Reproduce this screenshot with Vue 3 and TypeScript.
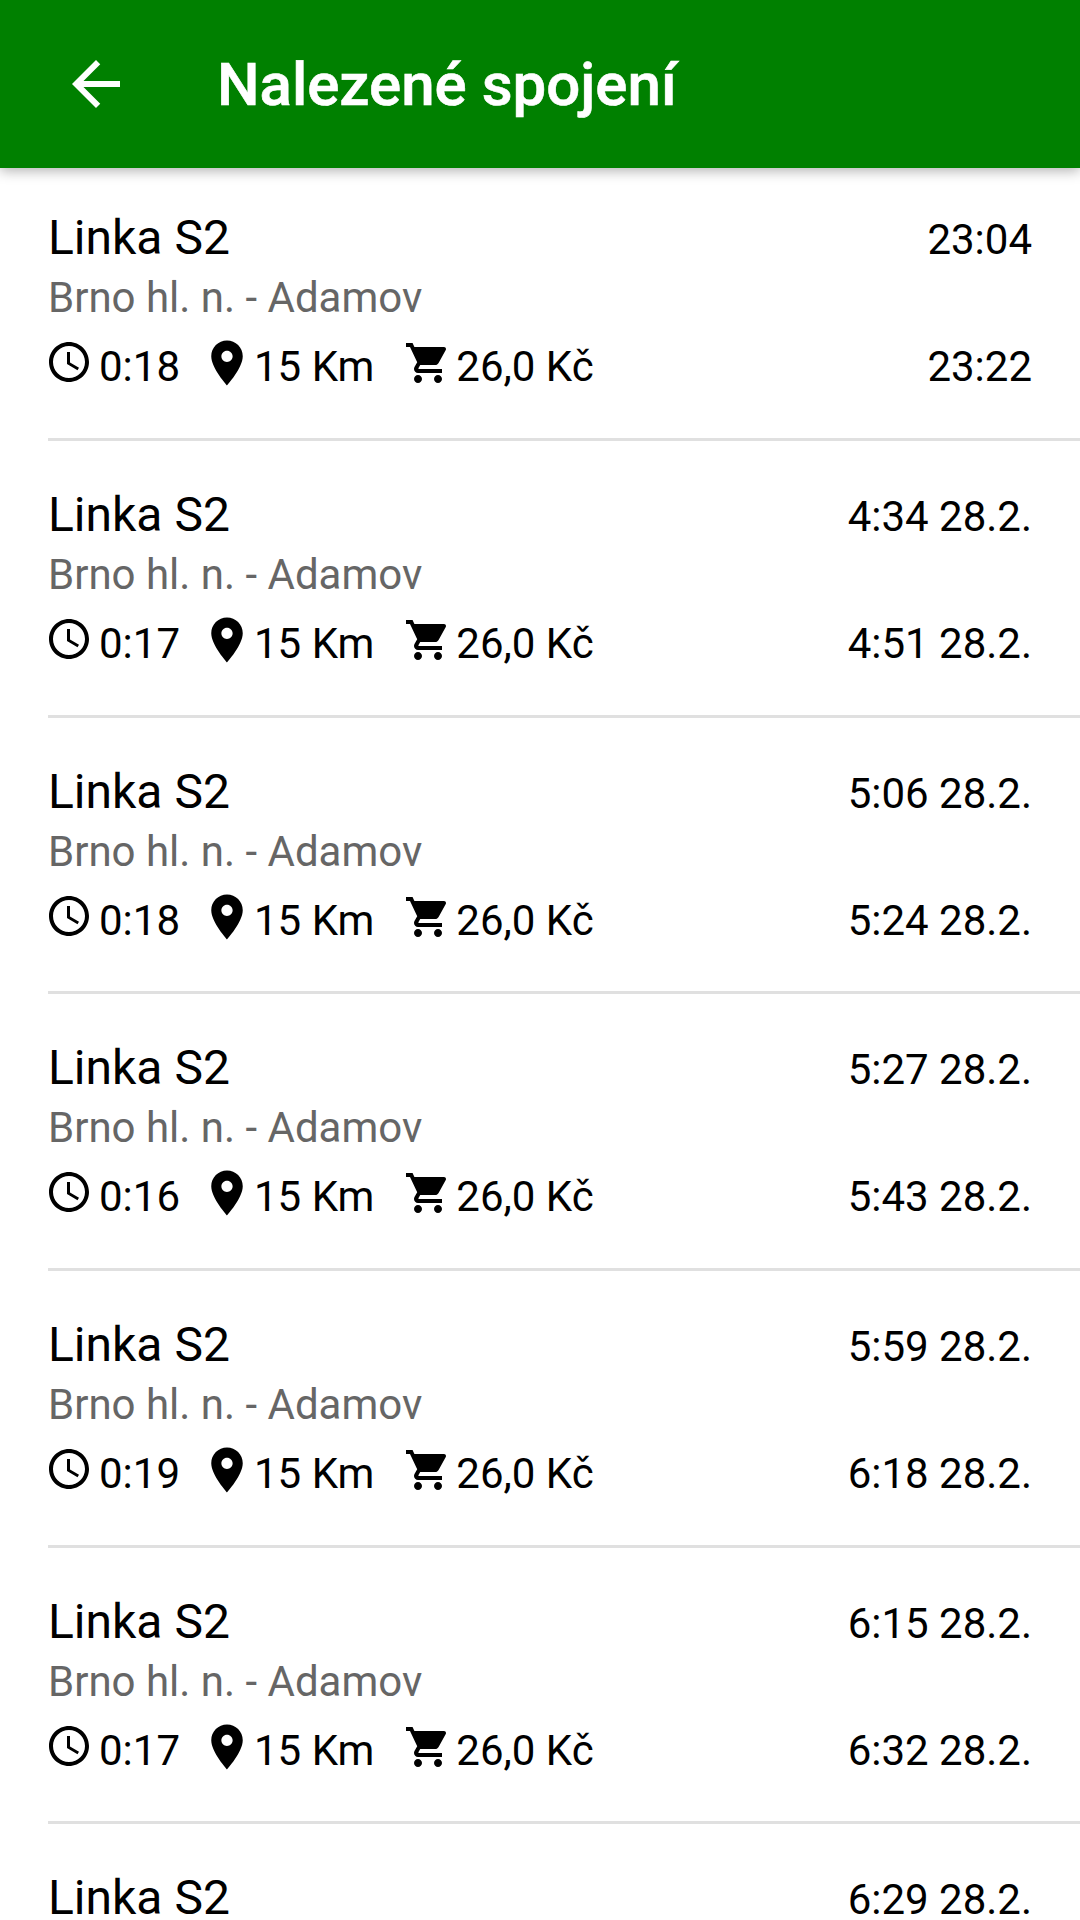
<script setup lang="ts">
interface Connection {
  duration: string
  departure: string
  arrival: string
}

const connections: Connection[] = [
  { duration: '0:18', departure: '23:04', arrival: '23:22' },
  { duration: '0:17', departure: '4:34 28.2.', arrival: '4:51 28.2.' },
  { duration: '0:18', departure: '5:06 28.2.', arrival: '5:24 28.2.' },
  { duration: '0:16', departure: '5:27 28.2.', arrival: '5:43 28.2.' },
  { duration: '0:19', departure: '5:59 28.2.', arrival: '6:18 28.2.' },
  { duration: '0:17', departure: '6:15 28.2.', arrival: '6:32 28.2.' },
  { duration: '0:18', departure: '6:29 28.2.', arrival: '6:47 28.2.' },
]
</script>

<template>
  <div class="screen">
    <header class="toolbar">
      <svg class="back" viewBox="0 0 24 24" width="72" height="72">
        <path fill="#fff" d="M20 11H7.83l5.59-5.59L12 4l-8 8 8 8 1.41-1.41L7.83 13H20v-2z" />
      </svg>
      <h1 class="title">Nalezené spojení</h1>
    </header>

    <ul class="list">
      <li v-for="(item, i) in connections" :key="i" class="row">
        <div class="line-top">
          <span class="name">Linka S2</span>
          <span class="time">{{ item.departure }}</span>
        </div>
        <div class="route">Brno hl. n. - Adamov</div>
        <div class="line-bottom">
          <div class="facts">
            <span class="fact fact-time">
              <svg viewBox="0 0 24 24" width="48" height="48">
                <path d="M11.99 2C6.47 2 2 6.48 2 12s4.47 10 9.99 10C17.52 22 22 17.52 22 12S17.52 2 11.99 2zM12 20c-4.42 0-8-3.58-8-8s3.58-8 8-8 8 3.58 8 8-3.58 8-8 8zm.5-13H11v6l5.25 3.15.75-1.23-4.5-2.67z" />
              </svg>
              {{ item.duration }}
            </span>
            <span class="fact fact-dist">
              <svg viewBox="0 0 24 24" width="54" height="54">
                <path d="M12 2C8.13 2 5 5.13 5 9c0 5.25 7 13 7 13s7-7.75 7-13c0-3.87-3.13-7-7-7zm0 9.5c-1.38 0-2.5-1.12-2.5-2.5s1.12-2.5 2.5-2.5 2.5 1.12 2.5 2.5-1.12 2.5-2.5 2.5z" />
              </svg>
              15 Km
            </span>
            <span class="fact fact-price">
              <svg viewBox="0 0 24 24" width="48" height="48">
                <path d="M7 18c-1.1 0-1.99.9-1.99 2S5.9 22 7 22s2-.9 2-2-.9-2-2-2zM1 2v2h2l3.6 7.59-1.35 2.45c-.16.28-.25.61-.25.96 0 1.1.9 2 2 2h12v-2H7.42c-.14 0-.25-.11-.25-.25l.03-.12.9-1.63h7.45c.75 0 1.41-.41 1.75-1.03l3.58-6.49c.08-.14.12-.31.12-.48 0-.55-.45-1-1-1H5.21l-.94-2H1zm16 16c-1.1 0-1.99.9-1.99 2s.89 2 1.99 2 2-.9 2-2-.9-2-2-2z" />
              </svg>
              26,0 Kč
            </span>
          </div>
          <span class="time">{{ item.arrival }}</span>
        </div>
      </li>
    </ul>
  </div>
</template>

<style>
html,
body {
  margin: 0;
  background: #fff;
}
</style>

<style scoped>
.screen {
  width: 1080px;
  height: 1920px;
  overflow: hidden;
  font-family: Roboto, "Liberation Sans", sans-serif;
  color: #000;
  background: #fff;
  position: relative;
}

.toolbar {
  height: 168px;
  background: #008000;
  display: flex;
  align-items: center;
  padding-left: 60px;
  box-shadow: 0 3px 12px rgba(0, 0, 0, 0.3);
  position: relative;
  z-index: 1;
}

.back {
  flex: none;
}

.title {
  margin: 0 0 0 85px;
  font-size: 60px;
  font-weight: 500;
  color: #fff;
  -webkit-text-stroke: 0.6px #fff;
}

.list {
  list-style: none;
  margin: 0;
  padding: 0;
}

.row {
  box-sizing: border-box;
  height: 276.7px;
  margin-left: 48px;
  padding: 46px 48px 0 0;
  border-bottom: 3px solid #e0e0e0;
}

.row:first-child {
  height: 273px;
  padding-top: 42px;
}

.line-top,
.line-bottom {
  display: flex;
  justify-content: space-between;
  align-items: baseline;
}

.name {
  font-size: 48px;
  line-height: 56px;
}

.time {
  font-size: 42px;
  line-height: 56px;
}

.route {
  font-size: 42px;
  line-height: 50px;
  color: #666;
  margin-top: 5px;
}

.line-bottom {
  margin-top: 16px;
  align-items: center;
}

.facts {
  display: flex;
  align-items: center;
  font-size: 42px;
  line-height: 56px;
}

.fact {
  display: flex;
  align-items: center;
}

/* icons sit a little above the text's centre */
.fact svg {
  margin-top: -8px;
  margin-bottom: 0;
}

.fact-time {
  gap: 6px;
}

.fact-time svg {
  margin-left: -3px;
  margin-top: -10px;
}

.fact-dist {
  margin-left: 20px;
}

.fact-price {
  margin-left: 30px;
  gap: 4px;
}
</style>
